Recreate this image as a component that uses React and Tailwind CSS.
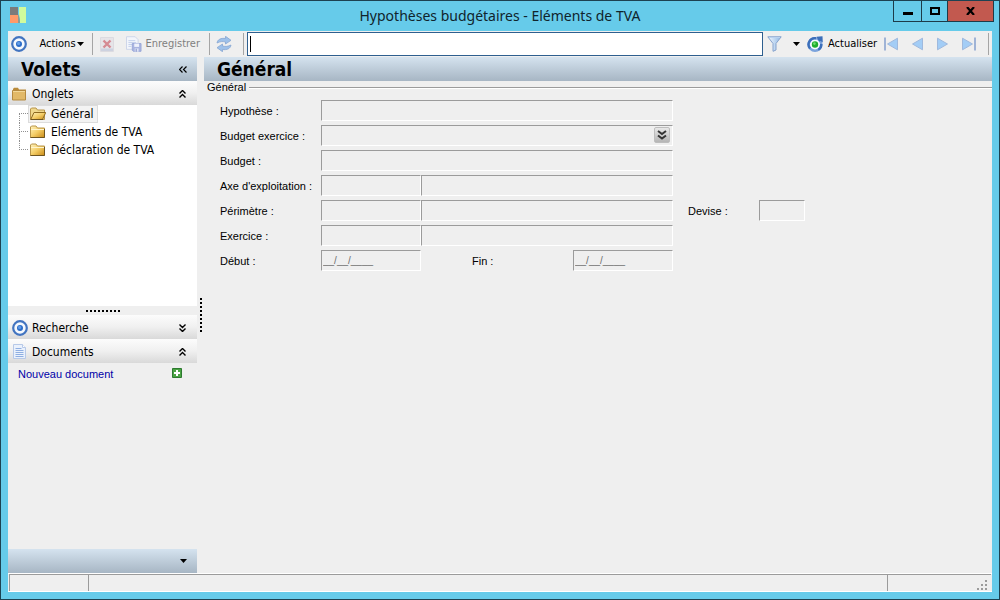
import React from 'react';

const uiFont = "font-['DejaVu_Sans_Condensed','DejaVu_Sans',sans-serif]";

// ── Icons ─────────────────────────────────────────────────────────────────────
const TargetIcon = () => (
    <svg width="16" height="16" viewBox="0 0 16 16" className="shrink-0">
        <circle cx="8" cy="8" r="6.8" fill="#f4f8fd" stroke="#4274c0" strokeWidth="2.200" />
        <circle cx="8" cy="8" r="3" fill="#2c6cc8" />
        <circle cx="7.6" cy="7.4" r="1.600" fill="#5f9be6" />
    </svg>
);

const AppLogo = () => (
    <svg width="16" height="16" viewBox="0 0 16 16" className="shrink-0">
        <path d="M0 0h8v8H0z" fill="#7b7b7b" />
        <path d="M0 8h8v8H0z" fill="#ff9a69" />
        <path d="M9 0h7v16h-6c0-4-.5-6-1-9z" fill="#d0fb9c" />
        <path d="M8 7c1.500 3 2 5 2 9H8z" fill="#8f9c92" />
    </svg>
);

const DeleteIcon = () => (
    <svg width="14" height="15" viewBox="0 0 14 15">
        <path d="M.5.5h13v14H.5z" fill="#e6e4e8" stroke="#dcdbe0" />
        <path d="M1 11.500h12v2.500H1z" fill="#cdd2e0" />
        <path d="M3.500 3.500l7 7M10.500 3.500l-7 7" stroke="#d58a93" strokeWidth="2.400" />
    </svg>
);

const SaveIcon = () => (
    <svg width="16" height="16" viewBox="0 0 16 16">
        <path d="M.5.5h9l3 3v10H.5z" fill="#f2f5fb" stroke="#ccd5e8" />
        <path d="M2.500 4.500h7M2.500 6.500h8M2.500 8.500h4M2.500 10.500h3" stroke="#c3cfea" />
        <path d="M6.500 7.500h9v8h-8l-1-1z" fill="#a9b4e0" stroke="#9aa7d8" />
        <path d="M8.500 7.500h5v3.500h-5z" fill="#eef1fb" />
        <path d="M9 12.500h4V16H9z" fill="#dfe4f5" />
        <path d="M10 13h1v3h-1z" fill="#7d8cc6" />
    </svg>
);

const SyncIcon = () => (
    <svg width="16" height="16" viewBox="0 0 16 16">
        <path d="M1 7C1.500 3.500 5 1.800 9.500 2.500V.3l5.500 4-5.500 3.700V6C6.500 5.200 4 5.500 1 7z" fill="#9ec1ea" stroke="#86a6d2" strokeWidth=".8" />
        <path d="M15 9c-.5 3.500-4 5.200-8.500 4.500v2.200l-5.500-4L6.500 8v2c3 .8 5.500.5 8.500-1z" fill="#9ec1ea" stroke="#86a6d2" strokeWidth=".8" />
    </svg>
);

const FunnelIcon = () => (
    <svg width="15" height="16" viewBox="0 0 15 16">
        <defs>
            <linearGradient id="funnel" x1="0" x2="1">
                <stop offset="0" stopColor="#f5faff" />
                <stop offset="1" stopColor="#8db6e4" />
            </linearGradient>
        </defs>
        <path d="M.8.8h13.400L9 7.500V14l-3 1.300V7.500z" fill="url(#funnel)" stroke="#86a2cc" />
        <path d="M2 1.500h11" stroke="#b9d2f0" />
    </svg>
);

const RefreshIcon = () => (
    <svg width="17" height="16" viewBox="0 0 17 16" className="shrink-0">
        <circle cx="8" cy="8.500" r="6.300" fill="#f5f9fe" stroke="#7ba3dc" strokeWidth="2.400" />
        <path d="M9 2.300A6.300 6.300 0 0 0 3 12.500" fill="none" stroke="#3c6fba" strokeWidth="2.400" />
        <path d="M14.300 8a6.300 6.300 0 0 1-3 5.800" fill="none" stroke="#3c6fba" strokeWidth="2.400" />
        <path d="M9.500.8l6-.5.3 6.200-2.300-1.500-1.500.5-.8-1.700z" fill="#3c6fba" />
        <circle cx="8" cy="8.500" r="3.200" fill="#1fae2c" />
        <circle cx="7.400" cy="7.600" r="1.300" fill="#6fdc70" />
    </svg>
);

const Folder = ({ open }) => (
    <svg width="16" height="14" viewBox="0 0 16 14" className="shrink-0">
        <defs>
            <linearGradient id="folder" x1="0" y1="0" x2="1" y2="1">
                <stop offset="0" stopColor="#fff3bf" />
                <stop offset=".5" stopColor="#f4cd66" />
                <stop offset="1" stopColor="#c98a16" />
            </linearGradient>
        </defs>
        <path d="M.5 12.500V2l1-1h4.500l1.500 2h7v9.500z" fill={open ? '#f0d88c' : 'url(#folder)'} stroke="#b8954a" />
        {open
            ? <path d="M.7 12.500L4 5.500h11.700l-3.200 7z" fill="url(#folder)" stroke="#8e6a20" />
            : <path d="M1 4.500h13" stroke="#fff6cf" />}
        <path d={open ? 'M1 12.500h12' : 'M.5 12.500h14V4'} fill="none" stroke="#6e5520" />
    </svg>
);

const PanelFolder = () => (
    <svg width="15" height="14" viewBox="0 0 15 14" className="shrink-0">
        <path d="M1 2l1-1.300h4L7 2.500h7V13H1z" fill="#b98a3a" />
        <path d="M.5 3.500h13v9.500h-13z" fill="#e2b968" stroke="#b58a40" />
        <path d="M1 4.500h12" stroke="#f3d898" />
    </svg>
);

const DocumentIcon = () => (
    <svg width="14" height="15" viewBox="0 0 14 15" className="ml-px shrink-0">
        <path d="M.5.5h9l3 3v11H.5z" fill="#eaf1fc" stroke="#b7c9e8" />
        <path d="M9.500.5v3h3" fill="#fff" stroke="#b7c9e8" />
        <path d="M2.500 4.500h6M2.500 6.500h8M2.500 8.500h8M2.500 10.500h8M2.500 12.500h8" stroke="#8fafe2" />
    </svg>
);

const PlusIcon = () => (
    <svg width="10" height="10" viewBox="0 0 10 10">
        <path d="M.5.5h9v9h-9z" fill="#4aa343" stroke="#2d7a2f" />
        <path d="M5 2v6M2 5h6" stroke="#fff" strokeWidth="2" />
    </svg>
);

const Caret = () => (
    <svg width="7" height="4" viewBox="0 0 7 4" className="shrink-0">
        <path d="M0 0h7L3.500 4z" fill="currentColor" />
    </svg>
);

const Chevrons = ({ up }) => (
    <svg width="7" height="8" viewBox="0 0 7 8" className={up ? '' : 'rotate-180'}>
        <path d="M.5 3.500l3-3 3 3M.5 7.500l3-3 3 3" fill="none" stroke="#000" strokeWidth="1.400" />
    </svg>
);

const NavIcon = ({ back, end }) => (
    <svg width={end ? 16 : 13} height="14" viewBox={end ? '0 0 16 14' : '0 0 13 14'} className={back ? 'rotate-180' : ''}>
        <path d="M1.500 1.200L11.500 7l-10 5.800z" fill="#a3cdf6" stroke="#9fb9dd" />
        {end && <path d="M14 .5v13" stroke="#9fb3d6" strokeWidth="2" />}
    </svg>
);

// ── Window frame ──────────────────────────────────────────────────────────────
const TitleBar = () => (
    <header className="relative flex h-[30px] shrink-0 items-center justify-center">
        <div className="absolute top-[6px] left-[9px]"><AppLogo /></div>
        <h1 className="font-['Noto_Sans','Open_Sans',sans-serif] text-[14px] leading-5 text-[#10242c]">
            Hypothèses budgétaires - Eléments de TVA
        </h1>
        <div className="absolute top-0 right-[5px] flex h-[21px] border border-t-0 border-[#1d3b49]">
            <button type="button" aria-label="Réduire" className="flex w-[28px] items-center justify-center border-r border-[#1d3b49]">
                <svg width="10" height="10" viewBox="0 0 10 10"><path d="M0 6h10v3H0z" /></svg>
            </button>
            <button type="button" aria-label="Agrandir" className="flex w-[26px] items-center justify-center border-r border-[#1d3b49]">
                <svg width="10" height="8" viewBox="0 0 10 8"><path d="M1 1h8v6H1z" fill="none" stroke="#000" strokeWidth="2" /></svg>
            </button>
            <button type="button" aria-label="Fermer" className="flex w-[45px] items-center justify-center bg-[#c2594f]">
                <svg width="9" height="8" viewBox="0 0 9 8"><path d="M1 0l7 8M8 0L1 8" stroke="#000" strokeWidth="2.200" /></svg>
            </button>
        </div>
    </header>
);

const Separator = () => <span className="h-[22px] w-px shrink-0 bg-[#a5a5a5]" />;

const Toolbar = () => (
    <div className={`flex h-[26px] shrink-0 items-center bg-[#efefef] px-[3px] text-[11px] ${uiFont}`}>
        <TargetIcon />
        <button type="button" className="ml-3 flex items-center gap-px"><span className="w-[37px] whitespace-nowrap">Actions</span><Caret /></button>
        <span className="w-2" />
        <Separator />
        <button type="button" aria-label="Supprimer" className="ml-[7px]"><DeleteIcon /></button>
        <button type="button" className="ml-3 flex w-[74px] items-center gap-1 whitespace-nowrap text-[#7f7f7f]"><SaveIcon />Enregistrer</button>
        <span className="w-[9px]" />
        <Separator />
        <button type="button" aria-label="Synchroniser" className="mx-[6px]"><SyncIcon /></button>
        <span className="w-[5px]" />
        <Separator />
        <div className="relative ml-[3px] h-6 min-w-0 grow">
            <input aria-label="Recherche" className="h-full w-full border border-[#2e5f8f] bg-white px-[3px] outline-none" />
            <span className="absolute top-1 left-[3px] h-4 w-px bg-black" />
        </div>
        <button type="button" aria-label="Filtrer" className="ml-1"><FunnelIcon /></button>
        <button type="button" aria-label="Options de filtre" className="ml-[11px]"><Caret /></button>
        <button type="button" className="ml-[7px] flex w-[70px] items-center gap-1 whitespace-nowrap"><RefreshIcon />Actualiser</button>
        <nav className="ml-[6px] flex w-[94px] items-center justify-between">
            <button type="button" aria-label="Premier"><NavIcon back end /></button>
            <button type="button" aria-label="Précédent"><NavIcon back /></button>
            <button type="button" aria-label="Suivant"><NavIcon /></button>
            <button type="button" aria-label="Dernier"><NavIcon end /></button>
        </nav>
        <span className="w-[11px]" />
        <Separator />
    </div>
);

// ── Side panels ───────────────────────────────────────────────────────────────
const PanelHeader = ({ icon, title, up }) => (
    <button type="button" className="flex h-6 w-full shrink-0 items-center bg-linear-to-b from-[#fcfcfc] via-[#f0f0f0] to-[#d9d9d9] pt-px pr-[11px] pl-1 text-left text-[12px]">
        <span className="flex w-[20px]">{icon}</span>
        <span className="grow">{title}</span>
        <Chevrons up={up} />
    </button>
);

const tabs = ['Général', 'Eléments de TVA', 'Déclaration de TVA'];

const Sidebar = () => (
    <aside className={`flex w-[189px] shrink-0 flex-col ${uiFont}`}>
        <div className="flex h-6 shrink-0 items-center justify-between bg-linear-to-b from-[#d5e3ef] to-[#a7b6c4] pr-[10px] pl-[13px]">
            <h2 className="text-[19px] leading-6 font-bold">Volets</h2>
            <button type="button" aria-label="Masquer les volets">
                <svg width="8" height="7" viewBox="0 0 8 7">
                    <path d="M3.500.5l-3 3 3 3M7.500.5l-3 3 3 3" fill="none" stroke="#000" strokeWidth="1.200" />
                </svg>
            </button>
        </div>
        <PanelHeader icon={<PanelFolder />} title="Onglets" up />
        <ul className="h-[201px] shrink-0 bg-white pl-[11px] text-[12px]">
            {tabs.map((tab, i) => (
                <li key={tab} className="flex h-[18px] items-center">
                    <span className="flex h-full w-[9px] flex-col">
                        <span className={`h-[9px] border-b border-dotted border-[#909090] ${i === 0 ? '' : 'border-l'}`} />
                        <span className={`grow border-dotted border-[#909090] ${i === tabs.length - 1 ? '' : 'border-l'}`} />
                    </span>
                    <a href="#" className={`flex h-[18px] items-center gap-[5px] border pr-[3px] pl-px whitespace-nowrap ${i === 0 ? 'border-[#dcdcdc] bg-[#f3f3f3]' : 'border-transparent'}`}>
                        <Folder open={i === 0} />
                        {tab}
                    </a>
                </li>
            ))}
        </ul>
        <div className="flex h-[9px] shrink-0 items-center justify-center bg-[#efefef]">
            <span className="w-[34px] border-t-2 border-dotted border-black" />
        </div>
        <PanelHeader icon={<TargetIcon />} title="Recherche" />
        <PanelHeader icon={<DocumentIcon />} title="Documents" up />
        <div className="flex grow items-start justify-between pt-[3px] pr-[15px] pl-[10px] font-['Liberation_Sans',sans-serif] text-[11px] leading-4">
            <a href="#" className="text-[#0000a8]">Nouveau document</a>
            <button type="button" aria-label="Ajouter" className="mt-[2px]"><PlusIcon /></button>
        </div>
        <div className="flex h-6 shrink-0 items-center justify-end bg-linear-to-b from-[#d5e3ef] to-[#a7b6c4] pr-[10px]">
            <button type="button" aria-label="Plus de volets"><Caret /></button>
        </div>
    </aside>
);

// ── Form ──────────────────────────────────────────────────────────────────────
const Label = ({ htmlFor, className = '', children }) => (
    <label htmlFor={htmlFor} className={`pt-[2px] whitespace-nowrap ${className}`}>{children}</label>
);

const Field = ({ className = '', ...props }) => (
    <input
        readOnly
        className={`h-[21px] w-full min-w-0 border border-t-[#9b9b9b] border-r-white border-b-white border-l-[#9b9b9b] bg-transparent px-px text-[10px] text-[#6d6d6d] outline-none ${className}`}
        {...props}
    />
);

const GeneralForm = () => (
    <fieldset className="font-['Liberation_Sans',sans-serif] text-[11px] leading-[13px]">
        <legend className="flex w-full items-center gap-[3px] pl-[3px]">
            Général
            <span className="h-[2px] grow border-t border-b border-t-[#9b9b9b] border-b-white" />
        </legend>
        <div className="grid grid-cols-[101px_100px_152px_100px_86px_46px] items-center gap-y-1 pt-[6px] pl-4">
            <Label htmlFor="hypothese">Hypothèse :</Label>
            <Field id="hypothese" className="col-span-3" />

            <Label htmlFor="budgetExercice" className="col-start-1">Budget exercice :</Label>
            <div className="relative col-span-3 flex h-[21px]">
                <Field id="budgetExercice" />
                <button type="button" aria-label="Choisir le budget" className="absolute top-[2px] right-[3px] flex size-4 items-center justify-center rounded-xs border border-[#bdbdbd] bg-linear-to-b from-[#e8e8e8] to-[#b5b5b5]">
                    <svg width="10" height="10" viewBox="0 0 10 10">
                        <path d="M1 1l4 3 4-3M1 5.500l4 3 4-3" fill="none" stroke="#333" strokeWidth="2" />
                    </svg>
                </button>
            </div>

            <Label htmlFor="budget" className="col-start-1">Budget :</Label>
            <Field id="budget" className="col-span-3" />

            <Label htmlFor="axe" className="col-start-1">Axe d'exploitation :</Label>
            <Field id="axe" />
            <Field aria-label="Libellé de l'axe" className="col-span-2" />

            <Label htmlFor="perimetre" className="col-start-1">Périmètre :</Label>
            <Field id="perimetre" />
            <Field aria-label="Libellé du périmètre" className="col-span-2" />
            <Label htmlFor="devise" className="pl-[15px]">Devise :</Label>
            <Field id="devise" />

            <Label htmlFor="exercice" className="col-start-1">Exercice :</Label>
            <Field id="exercice" />
            <Field aria-label="Libellé de l'exercice" className="col-span-2" />

            <Label htmlFor="debut" className="col-start-1">Début :</Label>
            <Field id="debut" defaultValue="__/__/____" />
            <Label htmlFor="fin" className="pl-[51px]">Fin :</Label>
            <Field id="fin" defaultValue="__/__/____" />
        </div>
    </fieldset>
);

const StatusBar = () => (
    <footer className="flex h-[19px] shrink-0 border-t border-b border-white bg-[#efefef] px-px">
        <span className="w-[79px] border-t border-l border-[#9b9b9b]" />
        <span className="grow border-t border-l border-[#9b9b9b]" />
        <span className="flex w-[104px] items-end justify-end border-t border-l border-[#9b9b9b] pr-1 pb-px">
            <svg width="10" height="10" viewBox="0 0 10 10">
                <path d="M8 0h2v2H8zM4 4h2v2H4zM8 4h2v2H8zM0 8h2v2H0zM4 8h2v2H4zM8 8h2v2H8z" fill="#9b9b9b" />
            </svg>
        </span>
    </footer>
);

const App = () => {
    return (
        <div className="flex h-screen flex-col border border-[#1d4252] bg-[#66cbea] text-black">
            <TitleBar />
            <div className="mx-[7px] mb-[7px] flex min-h-0 grow flex-col bg-[#efefef]">
                <Toolbar />
                <div className="flex min-h-0 grow">
                    <Sidebar />
                    <div className="flex w-[7px] shrink-0 items-center justify-center">
                        <span className="h-[34px] border-l-2 border-dotted border-black" />
                    </div>
                    <main className="min-w-0 grow">
                        <h2 className={`h-6 bg-linear-to-b from-[#d5e3ef] to-[#a7b6c4] pl-[13px] text-[19px] leading-6 font-bold ${uiFont}`}>
                            Général
                        </h2>
                        <GeneralForm />
                    </main>
                </div>
                <StatusBar />
            </div>
        </div>
    );
};

export default App;
